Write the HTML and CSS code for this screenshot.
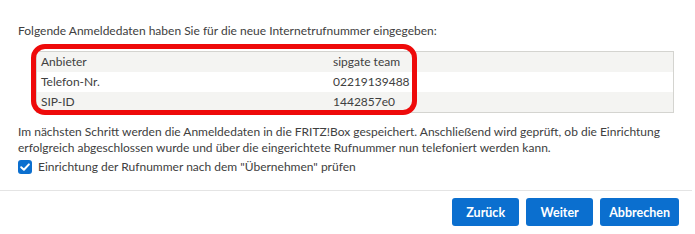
FILE: index.html
```html
<!DOCTYPE html>
<html lang="de">
<head>
<meta charset="utf-8">
<link rel="stylesheet" href="styles.css">
</head>
<body>
<div class="dialog">
  <div class="content">
    <p class="intro">Folgende Anmeldedaten haben Sie für die neue Internetrufnummer eingegeben:</p>
    <div class="table-wrap">
      <table class="data">
        <tr class="odd"><td class="key">Anbieter</td><td>sipgate team</td></tr>
        <tr><td class="key">Telefon-Nr.</td><td>02219139488</td></tr>
        <tr class="odd"><td class="key">SIP-ID</td><td>1442857e0</td></tr>
      </table>
      <div class="highlight"></div>
    </div>
    <p class="info">Im nächsten Schritt werden die Anmeldedaten in die FRITZ!Box gespeichert. Anschließend wird geprüft, ob die Einrichtung erfolgreich abgeschlossen wurde und über die eingerichtete Rufnummer nun telefoniert werden kann.</p>
    <label class="check">
      <span class="box"><svg viewBox="0 0 14 14" width="14" height="14"><path d="M3.2 7.2 L5.9 9.8 L10.9 4.4" fill="none" stroke="#fff" stroke-width="2" stroke-linecap="round" stroke-linejoin="round"/></svg></span>
      <span>Einrichtung der Rufnummer nach dem "Übernehmen" prüfen</span>
    </label>
  </div>
  <div class="footer">
    <button class="btn">Zurück</button>
    <button class="btn">Weiter</button>
    <button class="btn">Abbrechen</button>
  </div>
</div>
</body>
</html>
```
FILE: styles.css
```css
html, body {
  margin: 0;
  padding: 0;
  background: #ffffff;
}
body {
  font-family: Lato, "Open Sans", sans-serif;
  font-size: 12px;
  line-height: 16px;
  color: #404040;
}
.dialog {
  width: 692px;
}
.content {
  padding: 23px 16px 0 18px;
}
.intro {
  margin: 0;
}
.table-wrap {
  position: relative;
  margin: 12px 0 0 18px;
  width: 638px;
}
.data {
  width: 100%;
  border-collapse: collapse;
  border: 1px solid #d4d4d0;
}
.data td {
  padding: 2px 4px;
  height: 16px;
  line-height: 16px;
}
.data td.key {
  width: 284px;
}
.data tr.odd td {
  background: #f4f4f2;
}
.highlight {
  position: absolute;
  left: -5px;
  top: -7px;
  width: 376px;
  height: 61px;
  border: 5px solid #ee0a0a;
  border-radius: 14px;
}
.info {
  margin: 11px 0 0 0;
}
.check {
  display: flex;
  align-items: center;
  gap: 6px;
  margin-top: 3px;
  height: 16px;
}
.box {
  display: flex;
  width: 14px;
  height: 14px;
  border-radius: 3px;
  background: #0b6fcf;
}
.footer {
  margin-top: 15px;
  border-top: 1px solid #e4e4e4;
  display: flex;
  justify-content: flex-end;
  gap: 7px;
  padding: 7px 13px 0 0;
}
.btn {
  font-family: Lato, "Open Sans", sans-serif;
  font-size: 12.5px;
  font-weight: 700;
  color: #ffffff;
  background: #0b6fcf;
  border: none;
  border-radius: 3px;
  height: 28px;
  padding: 0 9px;
  min-width: 67px;
}
```
